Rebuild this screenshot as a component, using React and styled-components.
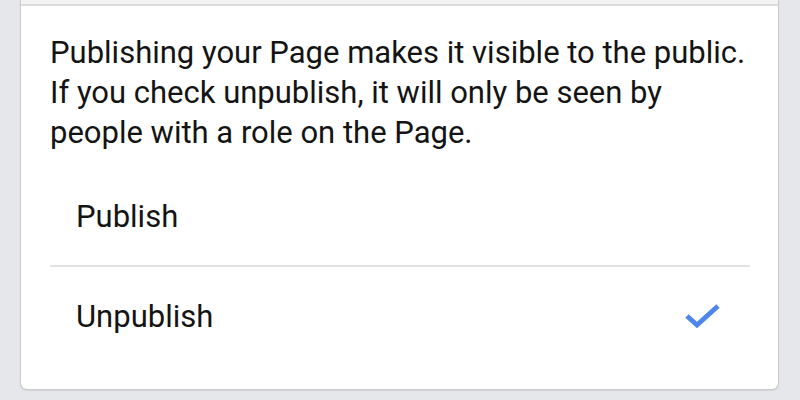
import React from "react";
import styled, { createGlobalStyle } from "styled-components";

const Global = createGlobalStyle`
  html, body {
    margin: 0;
    padding: 0;
    background: #e6e7eb;
    font-family: Roboto, "Noto Sans", sans-serif;
    -webkit-font-smoothing: antialiased;
  }
`;

const Page = styled.div`
  width: 800px;
  height: 400px;
  overflow: hidden;
  padding: 0 21px 0 20px;
  box-sizing: border-box;
`;

const Card = styled.section`
  background: #fff;
  border: 1px solid #c9cacd;
  border-top: none;
  border-radius: 0 0 7px 7px;
  box-shadow: 0 1px 1px rgba(0, 0, 0, 0.08);
  padding-bottom: 24px;
`;

const TopStrip = styled.div`
  height: 4px;
  background: #f3f3f4;
  border-bottom: 2px solid #dcdcde;
`;

const Description = styled.p`
  margin: 0;
  padding: 27px 29px 14px;
  font-size: 31px;
  line-height: 40px;
  color: #141414;
`;

const Options = styled.ul`
  list-style: none;
  margin: 0;
  padding: 0 28px 0 29px;
`;

const Option = styled.li`
  display: flex;
  align-items: center;
  justify-content: space-between;
  height: 98px;
  padding: 0 28px 0 26px;
  font-size: 31px;
  color: #141414;
  border-top: ${(p) => (p.$divider ? "2px solid #e3e3e5" : "none")};
`;

const Check = () => (
  <svg width="38" height="28" viewBox="0 0 38 28">
    <path
      d="M3 14 L13 23 L34 4"
      fill="none"
      stroke="#4f86ec"
      strokeWidth="5"
      strokeLinejoin="miter"
    />
  </svg>
);

export default function App() {
  const options = [
    { label: "Publish", checked: false },
    { label: "Unpublish", checked: true },
  ];
  return (
    <Page>
      <Global />
      <Card>
        <TopStrip />
        <Description>
          Publishing your Page makes it visible to the public.
          <br />
          If you check unpublish, it will only be seen by
          <br />
          people with a role on the Page.
        </Description>
        <Options>
          {options.map((o, i) => (
            <Option key={o.label} $divider={i > 0}>
              <span>{o.label}</span>
              {o.checked && <Check />}
            </Option>
          ))}
        </Options>
      </Card>
    </Page>
  );
}
